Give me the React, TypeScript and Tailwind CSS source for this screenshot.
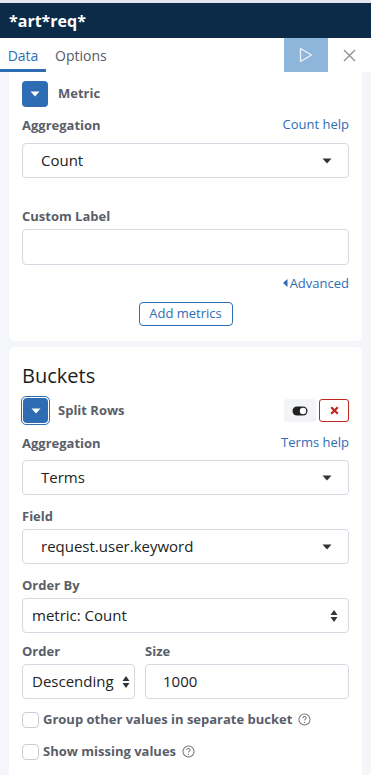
import React from "react";

const Caret = () => (
  <svg width="10" height="6" viewBox="0 0 10 6"><path d="M0.5 0.5 L9.5 0.5 L5 5.5 Z" fill="currentColor" /></svg>
);

const UpDown = () => (
  <svg width="8" height="14" viewBox="0 0 8 14"><path d="M0.5 6 L4 1 L7.5 6 Z M0.5 8 L4 13 L7.5 8 Z" fill="#333" /></svg>
);

const Help = () => (
  <svg width="13" height="13" viewBox="0 0 14 14" className="inline-block ml-[6px] align-[-2px]">
    <circle cx="7" cy="7" r="6" fill="none" stroke="#777" strokeWidth="1.1" />
    <path d="M5.2 5.4 C5.2 3.3 8.8 3.3 8.8 5.3 C8.8 6.6 7 6.7 7 8.2" fill="none" stroke="#777" strokeWidth="1.1" />
    <circle cx="7" cy="10.2" r="0.7" fill="#777" />
  </svg>
);

const Label = ({ children }: { children: React.ReactNode }) => (
  <div className="text-[13px] leading-[18px] font-bold text-[#5a5e69]">{children}</div>
);

const SelectBox = ({ text, arrows = false, pl = "pl-[18px]" }: { text: string; arrows?: boolean; pl?: string }) => (
  <div className={`h-[35px] border border-[#d6d9e2] rounded-[4px] bg-white flex items-center ${pl} pr-[10px] text-[15px] text-[#222]`}>
    <span className="flex-1">{text}</span>
    {arrows ? <UpDown /> : <span className="text-[#333] mr-[6px] flex"><Caret /></span>}
  </div>
);

export default function App() {
  return (
    <div className="w-[371px] h-[775px] overflow-hidden bg-[#f5f6f9]" style={{ fontFamily: '"Open Sans", sans-serif' }}>
      <div className="h-[3px] bg-[#e5e7ee]" />
      <div className="h-[35px] bg-[#0c2b48] flex items-center px-[9px] text-white font-bold text-[16px]">*art*req*</div>
      <div className="h-[34px] bg-white flex items-stretch text-[14px]">
        <div className="w-[46px] border-b-[3px] border-[#2e6db4] text-[#2e6db4] flex items-center justify-center pt-[3px]">Data</div>
        <div className="px-[9px] text-[#555a66] flex items-center">Options</div>
        <div className="flex-1" />
        <div className="w-[44px] bg-[#8eb5da] flex items-center justify-center">
          <svg width="14" height="16" viewBox="0 0 14 16"><path d="M1.5 1.5 L12.5 8 L1.5 14.5 Z" fill="none" stroke="#eef4fa" strokeWidth="1.3" strokeLinejoin="round" /></svg>
        </div>
        <div className="w-[43px] flex items-center justify-center">
          <svg width="13" height="13" viewBox="0 0 13 13"><path d="M1 1 L12 12 M12 1 L1 12" stroke="#8a8d95" strokeWidth="1.3" /></svg>
        </div>
      </div>
      <div className="px-[9px] flex flex-col gap-[6px]">
        <div className="bg-white rounded-b-[5px] px-[13px] pt-[9px] pb-[15px]">
          <div className="flex items-center h-[26px]">
            <div className="w-[26px] h-[26px] rounded-[4px] bg-[#2e6db4] text-white flex items-center justify-center"><Caret /></div>
            <span className="ml-[10px] text-[13px] font-bold text-[#5a5e69]">Metric</span>
          </div>
          <div className="mt-[9px] flex justify-between items-center h-[18px]">
            <Label>Aggregation</Label>
            <span className="text-[13px] text-[#2e6db4]">Count help</span>
          </div>
          <div className="mt-[9px]"><SelectBox text="Count" /></div>
          <div className="mt-[29px]"><Label>Custom Label</Label></div>
          <div className="mt-[4px] h-[36px] border border-[#d6d9e2] rounded-[4px] bg-white" />
          <div className="mt-[9px] flex justify-end items-center text-[13px] leading-[18px] text-[#2e6db4]">
            <svg width="5" height="8" viewBox="0 0 5 8" className="mr-[2px]"><path d="M4.5 0 L0 4 L4.5 8 Z" fill="#2e6db4" /></svg>Advanced
          </div>
          <div className="mt-[10px] flex justify-center">
            <div className="w-[94px] h-[24px] border border-[#2e6db4] rounded-[4px] text-[#2e6db4] text-[13px] flex items-center justify-center">Add metrics</div>
          </div>
        </div>
        <div className="bg-white rounded-t-[5px] px-[13px] pt-[16px] h-[500px] shrink-0">
          <div className="text-[20px] leading-[26px] text-[#1a1c21]">Buckets</div>
          <div className="mt-[7px] flex items-center h-[29px]">
            <div className="w-[29px] h-[29px] rounded-[5px] border border-[#2e6db4] p-[1px] -ml-[1px]">
              <div className="w-full h-full rounded-[4px] bg-[#2e6db4] text-white flex items-center justify-center"><Caret /></div>
            </div>
            <span className="ml-[8px] text-[13px] font-bold text-[#5a5e69]">Split Rows</span>
            <div className="flex-1" />
            <div className="w-[32px] h-[23px] rounded-[3px] bg-[#f3f4f7] flex items-center justify-center">
              <svg width="16" height="10" viewBox="0 0 16 10"><rect x="0.5" y="0.5" width="15" height="9" rx="4.5" fill="#222" /><circle cx="11" cy="5" r="3.2" fill="white" /></svg>
            </div>
            <div className="ml-[3px] w-[30px] h-[23px] rounded-[3px] border border-[#bd271e] flex items-center justify-center">
              <svg width="9" height="9" viewBox="0 0 9 9"><path d="M1.2 1.2 L7.8 7.8 M7.8 1.2 L1.2 7.8" stroke="#bd271e" strokeWidth="2.2" /></svg>
            </div>
          </div>
          <div className="mt-[9px] flex justify-between items-center h-[18px]">
            <Label>Aggregation</Label>
            <span className="text-[13px] text-[#2e6db4]">Terms help</span>
          </div>
          <div className="mt-[8px]"><SelectBox text="Terms" /></div>
          <div className="mt-[12px]"><Label>Field</Label></div>
          <div className="mt-[4px]"><SelectBox text="request.user.keyword" /></div>
          <div className="mt-[12px]"><Label>Order By</Label></div>
          <div className="mt-[4px]"><SelectBox text="metric: Count" arrows pl="pl-[9px]" /></div>
          <div className="mt-[9px] flex gap-[10px]">
            <div className="w-[113px]">
              <Label>Order</Label>
              <div className="mt-[4px] h-[35px] border border-[#d6d9e2] rounded-[4px] bg-white flex items-center pl-[9px] pr-[4px] text-[15px] text-[#222]">
                <span className="flex-1">Descending</span><UpDown />
              </div>
            </div>
            <div className="flex-1">
              <Label>Size</Label>
              <div className="mt-[4px] h-[35px] border border-[#d6d9e2] rounded-[4px] bg-white flex items-center pl-[17px] text-[15px] text-[#222]">1000</div>
            </div>
          </div>
          <div className="mt-[12px] flex items-center h-[17px]">
            <div className="w-[17px] h-[16px] border border-[#c9ccd4] rounded-[4px] bg-white" />
            <span className="ml-[4px] text-[13px] font-bold text-[#5a5e69]">Group other values in separate bucket</span>
            <Help />
          </div>
          <div className="mt-[15px] flex items-center h-[17px]">
            <div className="w-[17px] h-[16px] border border-[#c9ccd4] rounded-[4px] bg-white" />
            <span className="ml-[4px] text-[13px] font-bold text-[#5a5e69]">Show missing values</span>
            <Help />
          </div>
        </div>
      </div>
    </div>
  );
}
